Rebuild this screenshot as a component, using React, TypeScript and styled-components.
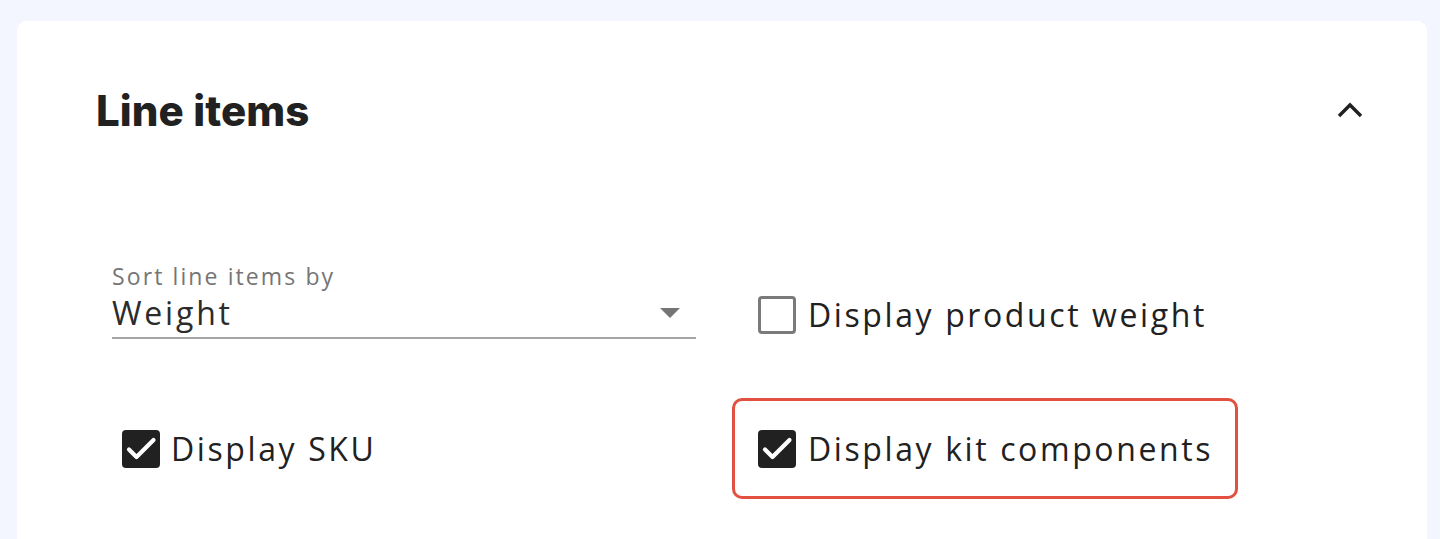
import React, { useState } from 'react'
import styled, { createGlobalStyle } from 'styled-components'

const GlobalStyle = createGlobalStyle`
  html, body {
    margin: 0;
    padding: 0;
    background: #f3f6fe;
    font-family: 'Open Sans', 'Noto Sans', sans-serif;
  }
`

const Page = styled.div`
  padding: 21px 13px 0 17px;
  height: 539px;
  box-sizing: border-box;
  overflow: hidden;
`

const Card = styled.section`
  background: #fff;
  border-radius: 10px;
  height: 600px;
  box-sizing: border-box;
  padding: 0 63px 0 79px;
`

const Header = styled.div`
  display: flex;
  align-items: center;
  justify-content: space-between;
  height: 178px;
`

const Title = styled.h2`
  margin: 0;
  font-family: Inter, 'Noto Sans', sans-serif;
  font-weight: 800;
  font-size: 42px;
  letter-spacing: 0.1px;
  color: #212121;
`

const Toggle = styled.button`
  border: 0;
  background: none;
  padding: 0;
  display: flex;
  cursor: pointer;
`

const Grid = styled.div`
  display: grid;
  grid-template-columns: 584px auto;
  column-gap: 36px;
  row-gap: 33px;
  padding-left: 16px;
  padding-top: 65px;
`

const Cell = styled.div<{ $indent?: number }>`
  display: flex;
  align-items: center;
  padding-left: ${p => p.$indent || 0}px;
`

const Field = styled.div`
  align-self: flex-start;
  width: 100%;
  display: flex;
  flex-direction: column;
`

const FieldLabel = styled.label`
  font-size: 23px;
  letter-spacing: 2.1px;
  color: #757575;
  line-height: 24px;
`

const SelectBox = styled.div`
  display: flex;
  align-items: center;
  justify-content: space-between;
  border-bottom: 2px solid #a5a5a5;
  height: 49px;
  font-size: 32px;
  letter-spacing: 2.8px;
  color: #2b2b2b;
`

const Arrow = styled.span`
  width: 0;
  height: 0;
  border-left: 10px solid transparent;
  border-right: 10px solid transparent;
  border-top: 10px solid #757575;
  margin-right: 16px;
`

const CheckRow = styled.label<{ $highlight?: boolean }>`
  display: flex;
  align-items: center;
  gap: 12px;
  box-sizing: border-box;
  height: 101px;
  padding: 0 22px 0 23px;
  border: 3px solid ${p => (p.$highlight ? '#e2503f' : 'transparent')};
  border-radius: 10px;
  cursor: pointer;
`

const PlainCheckRow = styled.label`
  display: flex;
  align-items: center;
  gap: 11px;
  cursor: pointer;
`

const Box = styled.span<{ $checked: boolean }>`
  width: 38px;
  height: 38px;
  box-sizing: border-box;
  border-radius: 4px;
  display: flex;
  align-items: center;
  justify-content: center;
  background: ${p => (p.$checked ? '#212121' : '#fff')};
  border: ${p => (p.$checked ? '0' : '3px solid #7a7a7a')};
  flex-shrink: 0;
`

const CheckText = styled.span`
  font-size: 32px;
  letter-spacing: 2.6px;
  color: #212121;
`

const Tick = () => (
  <svg width="38" height="38" viewBox="0 0 38 38" fill="none">
    <path d="M7 19.5l7.5 7.5L31.5 10" stroke="#fff" strokeWidth="4.2" strokeLinecap="round" strokeLinejoin="round" />
  </svg>
)

const Check: React.FC<{ checked: boolean; label: string; onToggle: () => void }> = ({ checked, label, onToggle }) => (
  <>
    <Box $checked={checked} onClick={onToggle}>{checked ? <Tick /> : null}</Box>
    <CheckText>{label}</CheckText>
  </>
)

const App: React.FC = () => {
  const [weight, setWeight] = useState(false)
  const [sku, setSku] = useState(true)
  const [kit, setKit] = useState(true)

  return (
    <Page>
      <GlobalStyle />
      <Card>
        <Header>
          <Title>Line items</Title>
          <Toggle aria-label="collapse">
            <svg width="28" height="16" viewBox="0 0 28 16" fill="none">
              <path d="M3 14L14 3l11 11" stroke="#212121" strokeWidth="3.4" />
            </svg>
          </Toggle>
        </Header>
        <Grid>
          <Cell>
            <Field>
              <FieldLabel>Sort line items by</FieldLabel>
              <SelectBox>
                Weight
                <Arrow />
              </SelectBox>
            </Field>
          </Cell>
          <Cell>
            <CheckRow>
              <Check checked={weight} label="Display product weight" onToggle={() => setWeight(v => !v)} />
            </CheckRow>
          </Cell>
          <Cell $indent={10}>
            <PlainCheckRow>
              <Check checked={sku} label="Display SKU" onToggle={() => setSku(v => !v)} />
            </PlainCheckRow>
          </Cell>
          <Cell>
            <CheckRow $highlight>
              <Check checked={kit} label="Display kit components" onToggle={() => setKit(v => !v)} />
            </CheckRow>
          </Cell>
        </Grid>
      </Card>
    </Page>
  )
}

export default App
